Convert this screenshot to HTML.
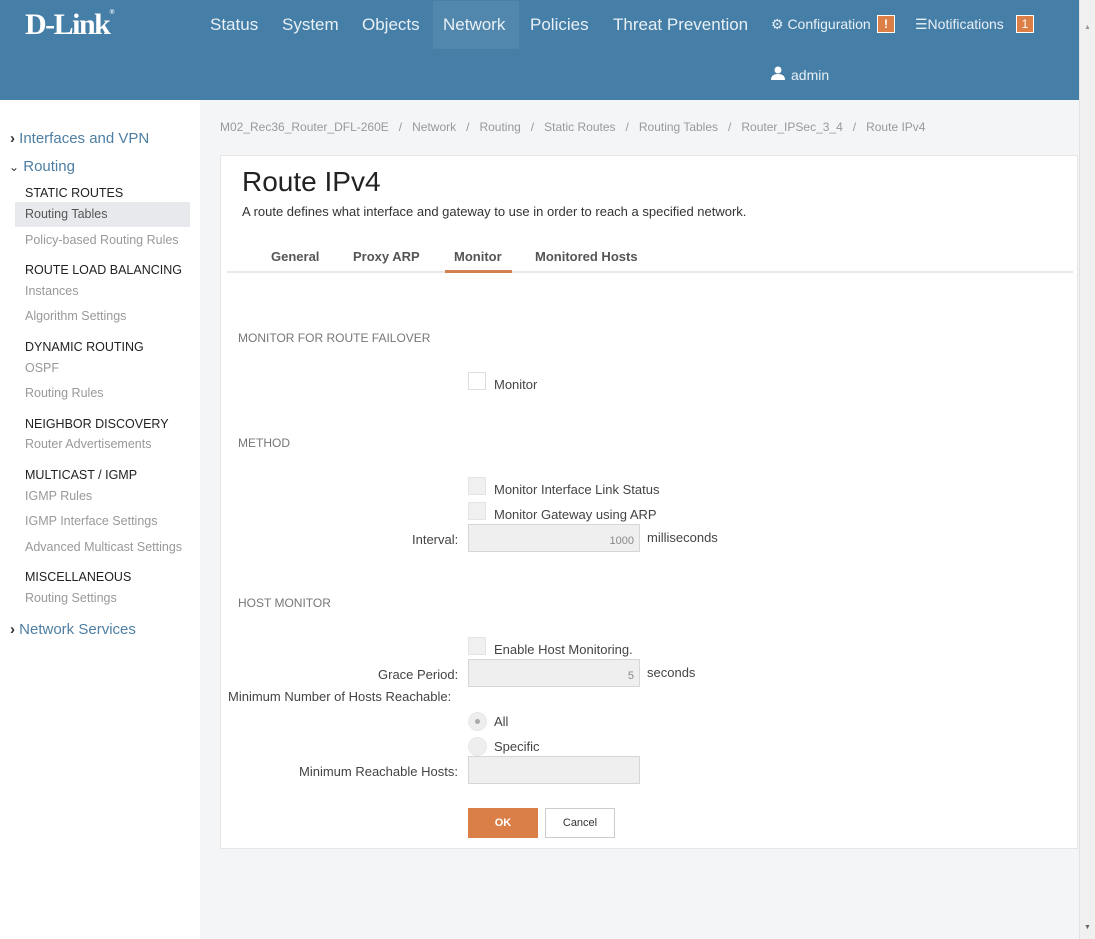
<!DOCTYPE html>
<html><head><meta charset="utf-8"><style>
*{margin:0;padding:0;box-sizing:border-box}
body{width:1095px;height:939px;overflow:hidden;font-family:"Liberation Sans",sans-serif;background:#f3f5f7;position:relative}
.a{position:absolute;white-space:nowrap}
#hdr{position:absolute;left:0;top:0;width:1079px;height:100px;background:#457ea6}
.nav{position:absolute;top:15px;font-size:17px;color:#e8f0f6}
#side{position:absolute;left:0;top:100px;width:200px;height:839px;background:#fff}
.sh{font-size:15px;color:#4e7fa3}
.cat{font-size:12.5px;color:#222}
.it{font-size:12.5px;color:#999}
#card{position:absolute;left:220px;top:155px;width:858px;height:694px;background:#fff;border:1px solid #e6e6e6}
.sec{font-size:12px;color:#777}
.lbl{font-size:13px;color:#444}
.cb{position:absolute;width:18px;height:18px;background:#f0f0f0;border:1px solid #e4e4e4}
.inp{position:absolute;height:28px;width:172px;background:#efefef;border:1px solid #d6d6d6;font-size:11px;color:#888;text-align:right;padding:10px 5px 0 0}
.rad{position:absolute;width:19px;height:19px;border-radius:50%;background:#eee;border:1px solid #e8e8e8}
#sb{position:absolute;left:1079px;top:0;width:16px;height:939px;background:#f0f0f0;border-left:1px solid #e2e2e2}
</style></head><body>
<div id="hdr">
<div class="a" style="left:25px;top:8px;font-family:'Liberation Serif',serif;font-weight:bold;font-size:30px;color:#fff;letter-spacing:-1.5px">D-Link<span style="font-size:7px;vertical-align:top">®</span></div>
<div style="position:absolute;left:433px;top:1px;width:86px;height:48px;background:#5287ad"></div>
<div class="nav" style="left:210px">Status</div>
<div class="nav" style="left:282px">System</div>
<div class="nav" style="left:362px">Objects</div>
<div class="nav" style="left:443px">Network</div>
<div class="nav" style="left:530px">Policies</div>
<div class="nav" style="left:613px">Threat Prevention</div>
<div class="a" style="left:771px;top:16px;font-size:14px;color:#e8f0f6">⚙ Configuration</div>
<div class="a" style="left:877px;top:15px;width:18px;height:18px;background:#dc7f47;border:1px solid #fff;color:#fff;font-size:12px;font-weight:bold;text-align:center;line-height:16px">!</div>
<div class="a" style="left:915px;top:16px;font-size:14px;color:#e8f0f6">☰Notifications</div>
<div class="a" style="left:1016px;top:15px;width:18px;height:18px;background:#dc7f47;border:1px solid #fff;color:#fff;font-size:12px;text-align:center;line-height:16px">1</div>
<svg class="a" style="left:771px;top:66px" width="14" height="14" viewBox="0 0 14 14"><circle cx="7" cy="4" r="3.5" fill="#fff"/><path d="M0 14 Q0 8 7 8 Q14 8 14 14Z" fill="#fff"/></svg>
<div class="a" style="left:791px;top:67px;font-size:14px;color:#e8f0f6">admin</div>
</div>
<div id="side">
<div class="a sh" style="left:10px;top:30px"><b style="color:#333">›</b> Interfaces and VPN</div>
<div class="a sh" style="left:9px;top:58px"><span style="color:#333;font-size:12px">⌄</span> Routing</div>
<div class="a cat" style="left:25px;top:86px">STATIC ROUTES</div>
<div style="position:absolute;left:15px;top:102px;width:175px;height:25px;background:#e8e9ec"></div>
<div class="a" style="left:25px;top:107px;font-size:12.5px;color:#555">Routing Tables</div>
<div class="a it" style="left:25px;top:133px">Policy-based Routing Rules</div>
<div class="a cat" style="left:25px;top:163px">ROUTE LOAD BALANCING</div>
<div class="a it" style="left:25px;top:184px">Instances</div>
<div class="a it" style="left:25px;top:209px">Algorithm Settings</div>
<div class="a cat" style="left:25px;top:240px">DYNAMIC ROUTING</div>
<div class="a it" style="left:25px;top:261px">OSPF</div>
<div class="a it" style="left:25px;top:286px">Routing Rules</div>
<div class="a cat" style="left:25px;top:317px">NEIGHBOR DISCOVERY</div>
<div class="a it" style="left:25px;top:337px">Router Advertisements</div>
<div class="a cat" style="left:25px;top:368px">MULTICAST / IGMP</div>
<div class="a it" style="left:25px;top:389px">IGMP Rules</div>
<div class="a it" style="left:25px;top:414px">IGMP Interface Settings</div>
<div class="a it" style="left:25px;top:440px">Advanced Multicast Settings</div>
<div class="a cat" style="left:25px;top:470px">MISCELLANEOUS</div>
<div class="a it" style="left:25px;top:491px">Routing Settings</div>
<div class="a sh" style="left:10px;top:521px"><b style="color:#333">›</b> Network Services</div>
</div>
<div class="a" style="left:220px;top:120px;font-size:12px;color:#999">M02_Rec36_Router_DFL-260E &nbsp; / &nbsp; Network &nbsp; / &nbsp; Routing &nbsp; / &nbsp; Static Routes &nbsp; / &nbsp; Routing Tables &nbsp; / &nbsp; Router_IPSec_3_4 &nbsp; / &nbsp; Route IPv4</div>
<div id="card">
<div class="a" style="left:21px;top:10px;font-size:28px;color:#222">Route IPv4</div>
<div class="a" style="left:21px;top:48px;font-size:13px;color:#333">A route defines what interface and gateway to use in order to reach a specified network.</div>
<div style="position:absolute;left:6px;top:115px;width:846px;height:2px;background:#e8e8e8"></div>
<div style="position:absolute;left:224px;top:114px;width:67px;height:3px;background:#d2804f"></div>
<div class="a" style="left:50px;top:93px;font-size:13px;font-weight:bold;color:#555">General</div>
<div class="a" style="left:132px;top:93px;font-size:13px;font-weight:bold;color:#555">Proxy ARP</div>
<div class="a" style="left:233px;top:93px;font-size:13px;font-weight:bold;color:#555">Monitor</div>
<div class="a" style="left:314px;top:93px;font-size:13px;font-weight:bold;color:#555">Monitored Hosts</div>
<div class="a sec" style="left:17px;top:175px">MONITOR FOR ROUTE FAILOVER</div>
<div class="cb" style="left:247px;top:216px;background:#fff;border-color:#ddd"></div>
<div class="a lbl" style="left:273px;top:221px">Monitor</div>
<div class="a sec" style="left:17px;top:280px">METHOD</div>
<div class="cb" style="left:247px;top:321px"></div>
<div class="a lbl" style="left:273px;top:326px">Monitor Interface Link Status</div>
<div class="cb" style="left:247px;top:346px"></div>
<div class="a lbl" style="left:273px;top:351px">Monitor Gateway using ARP</div>
<div class="a lbl" style="left:191px;top:376px">Interval:</div>
<div class="inp" style="left:247px;top:368px">1000</div>
<div class="a lbl" style="left:426px;top:374px">milliseconds</div>
<div class="a sec" style="left:17px;top:440px">HOST MONITOR</div>
<div class="cb" style="left:247px;top:481px"></div>
<div class="a lbl" style="left:273px;top:486px">Enable Host Monitoring.</div>
<div class="a lbl" style="left:157px;top:511px">Grace Period:</div>
<div class="inp" style="left:247px;top:503px">5</div>
<div class="a lbl" style="left:426px;top:509px">seconds</div>
<div class="a lbl" style="left:7px;top:533px">Minimum Number of Hosts Reachable:</div>
<div class="rad" style="left:247px;top:556px"><div style="position:absolute;left:6px;top:6px;width:5px;height:5px;border-radius:50%;background:#aaa"></div></div>
<div class="a lbl" style="left:273px;top:558px">All</div>
<div class="rad" style="left:247px;top:581px"></div>
<div class="a lbl" style="left:273px;top:583px">Specific</div>
<div class="a lbl" style="left:78px;top:608px">Minimum Reachable Hosts:</div>
<div class="inp" style="left:247px;top:600px"></div>
<div class="a" style="left:247px;top:652px;width:70px;height:30px;background:#da7f48;color:#fff;font-size:11px;font-weight:bold;text-align:center;line-height:30px">OK</div>
<div class="a" style="left:324px;top:652px;width:70px;height:30px;background:#fff;border:1px solid #ccc;color:#333;font-size:11px;text-align:center;line-height:28px">Cancel</div>
</div>
<div id="sb"><div class="a" style="left:4px;top:24px;font-size:7px;color:#999">▲</div><div class="a" style="left:4px;top:924px;font-size:7px;color:#666">▼</div></div>
</body></html>
